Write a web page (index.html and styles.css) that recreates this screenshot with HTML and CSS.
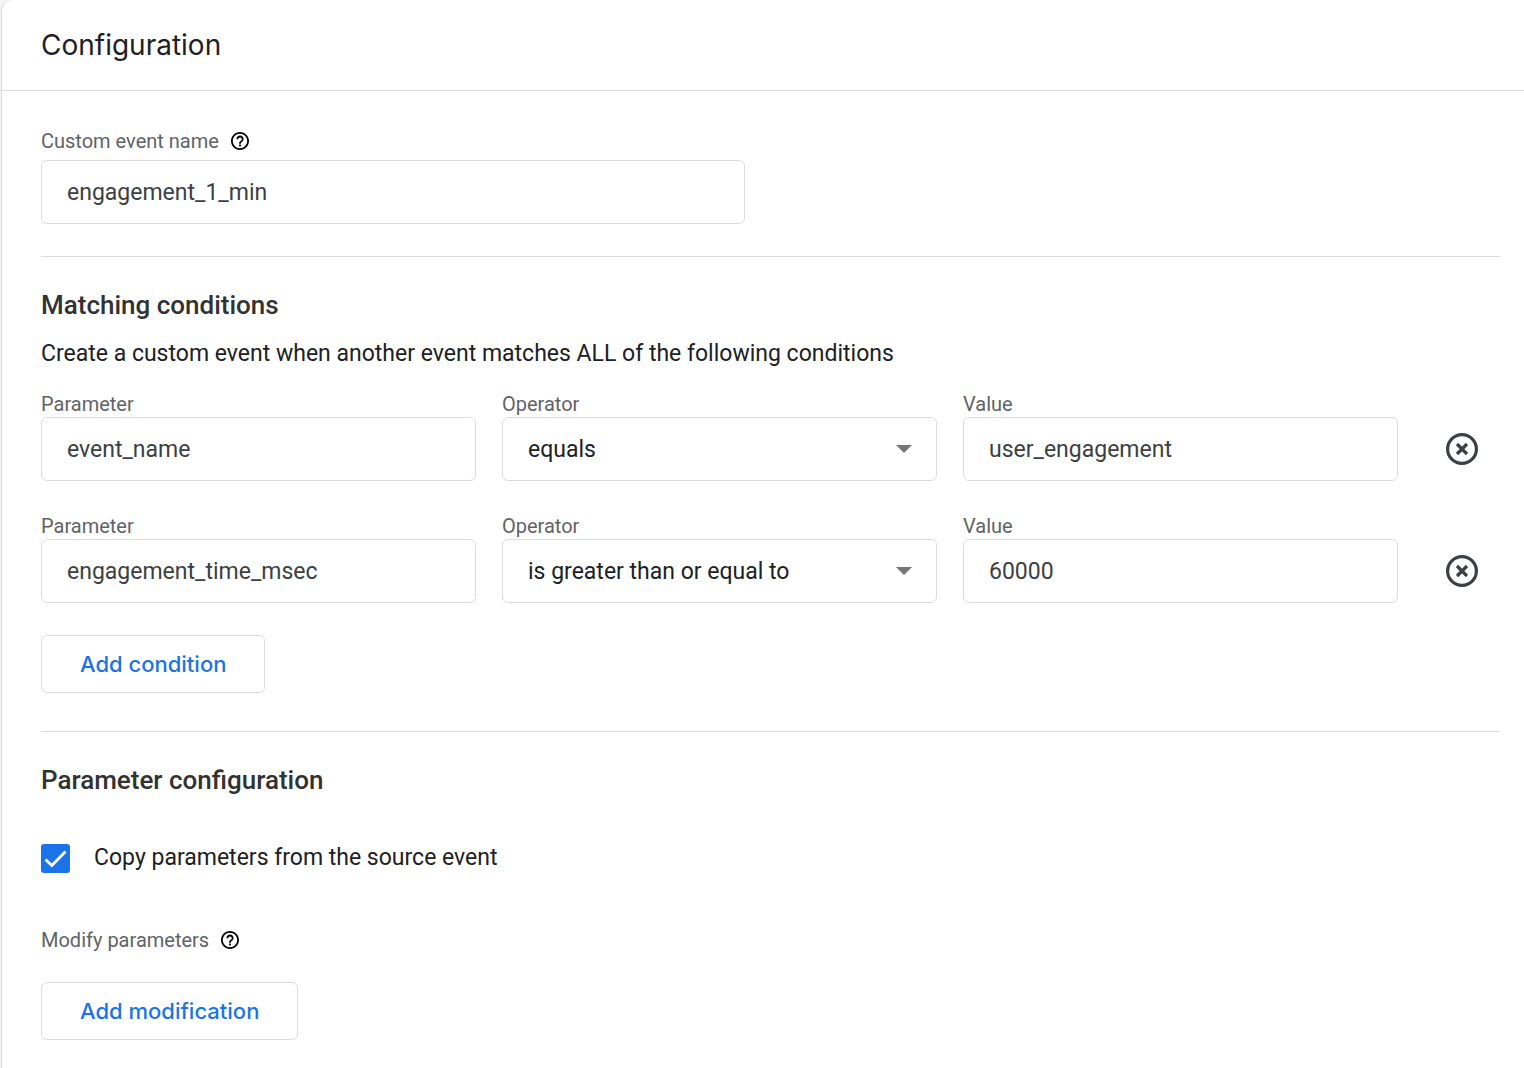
FILE: index.html
```html
<!DOCTYPE html>
<html lang="en">
<head>
<meta charset="utf-8">
<meta name="viewport" content="width=device-width, initial-scale=1">
<title>Configuration</title>
<link rel="stylesheet" href="styles.css">
</head>
<body>
<svg class="sprite" aria-hidden="true">
  <symbol id="help" viewBox="2 2 20 20"><path d="M11 18h2v-2h-2v2zm1-16C6.480 2 2 6.480 2 12s4.480 10 10 10 10-4.480 10-10S17.520 2 12 2zm0 18c-4.410 0-8-3.590-8-8s3.590-8 8-8 8 3.590 8 8-3.590 8-8 8zm0-14c-2.210 0-4 1.790-4 4h2c0-1.100.900-2 2-2s2 .900 2 2c0 2-3 1.750-3 5h2c0-2.250 3-2.500 3-5 0-2.210-1.790-4-4-4z"/></symbol>
  <symbol id="remove" viewBox="0 0 32 32"><circle cx="16" cy="16" r="14.400" fill="none" stroke="currentColor" stroke-width="3.200"/><path d="M11 11l10 10M21 11L11 21" fill="none" stroke="currentColor" stroke-width="3.200"/></symbol>
</svg>
<main class="card">
  <header class="card-header"><h1>Configuration</h1></header>
  <form class="card-body">
    <section class="section section-name">
      <div class="label-row">
        <label for="event-name">Custom event name</label>
        <button type="button" class="help" aria-label="About custom event names"><svg><use href="#help"/></svg></button>
      </div>
      <input class="control control-name" id="event-name" type="text" value="engagement_1_min">
    </section>

    <section class="section">
      <h2>Matching conditions</h2>
      <p class="description">Create a custom event when another event matches ALL of the following conditions</p>
      <div class="conditions">
        <div class="condition">
          <div class="field"><label for="param-1">Parameter</label><input class="control" id="param-1" type="text" value="event_name"></div>
          <div class="field"><label for="op-1">Operator</label><select class="control" id="op-1"><option>equals</option></select></div>
          <div class="field"><label for="value-1">Value</label><input class="control" id="value-1" type="text" value="user_engagement"></div>
          <button type="button" class="remove" aria-label="Remove condition"><svg><use href="#remove"/></svg></button>
        </div>
        <div class="condition">
          <div class="field"><label for="param-2">Parameter</label><input class="control" id="param-2" type="text" value="engagement_time_msec"></div>
          <div class="field"><label for="op-2">Operator</label><select class="control" id="op-2"><option>is greater than or equal to</option></select></div>
          <div class="field"><label for="value-2">Value</label><input class="control" id="value-2" type="text" value="60000"></div>
          <button type="button" class="remove" aria-label="Remove condition"><svg><use href="#remove"/></svg></button>
        </div>
      </div>
      <button type="button" class="button">Add condition</button>
    </section>

    <section class="section">
      <h2>Parameter configuration</h2>
      <label class="check"><input type="checkbox" checked>Copy parameters from the source event</label>
      <div class="label-row label-modify">
        <span>Modify parameters</span>
        <button type="button" class="help" aria-label="About modifying parameters"><svg><use href="#help"/></svg></button>
      </div>
      <button type="button" class="button">Add modification</button>
    </section>
  </form>
</main>
</body>
</html>
```
FILE: styles.css
```css
* {
  box-sizing: border-box;
}

body {
  margin: 0;
  background: #f1f3f4;
  color: #202124;
  font-family: Roboto, "Liberation Sans", sans-serif;
  font-size: 23px;
  line-height: 32px;
}

.sprite {
  display: none;
}

button,
input,
select {
  font: inherit;
}

h1,
h2,
p {
  margin: 0;
}

.card {
  min-height: 100vh;
  margin-left: 1px;
  background: #fff;
  border-left: 1px solid #dadce0;
  border-top-left-radius: 12px;
}

.card-header {
  padding: 25px 39px;
  border-bottom: 1px solid #dadce0;
}

h1 {
  font-family: Inter, "Liberation Sans", sans-serif;
  font-size: 28px;
  font-weight: 400;
  line-height: 40px;
}

h2 {
  color: #323232;
  font-size: 26px;
  font-weight: 500;
}

.card-body {
  padding: 5px 24px 28px 39px;
}

.section {
  padding: 32px 0 38px;
  border-bottom: 1px solid #dadce0;
}

.section-name {
  padding-bottom: 32px;
}

.section:last-child {
  padding-bottom: 0;
  border-bottom: 0;
}

.label-row,
.field label {
  color: #5f6368;
  font-size: 20px;
  line-height: 26px;
}

.label-row {
  display: flex;
  align-items: center;
  gap: 12px;
  margin-bottom: 6px;
}

.help {
  display: flex;
  padding: 0;
  color: #000;
  background: none;
  border: 0;
}

.help svg {
  width: 18px;
  height: 18px;
  fill: currentColor;
}

.control {
  display: block;
  width: 100%;
  height: 64px;
  padding: 0 25px;
  color: #3c4043;
  background: #fff;
  border: 1px solid #dadce0;
  border-radius: 6px;
}

.control-name {
  max-width: 704px;
}

select.control {
  appearance: none;
  padding-top: 2px;
  padding-right: 56px;
  color: #202124;
  background: url("data:image/svg+xml,%3Csvg xmlns='http://www.w3.org/2000/svg' viewBox='0 0 16 8'%3E%3Cpath fill='%23757575' d='M0 0h16L8 8z'/%3E%3C/svg%3E") no-repeat right 24px center / 16px 8px;
}

.description {
  margin: 17px 0 21px;
}

.conditions {
  display: grid;
  gap: 32px;
  margin-bottom: 32px;
}

.condition {
  display: grid;
  grid-template-columns: repeat(3, minmax(0, 1fr)) 76px;
  gap: 26px;
  align-items: end;
}

.field label {
  display: block;
}

.remove {
  display: flex;
  align-items: center;
  justify-content: center;
  height: 64px;
  padding: 0;
  color: #3c4043;
  background: none;
  border: 0;
}

.remove svg {
  width: 32px;
  height: 32px;
}

.button {
  display: block;
  height: 58px;
  padding: 0 38px;
  color: #1a73e8;
  background: #fff;
  border: 1px solid #dadce0;
  border-radius: 6px;
  font-family: Inter, "Liberation Sans", sans-serif;
  font-size: 22px;
  font-weight: 500;
}

.check {
  display: flex;
  align-items: center;
  gap: 24px;
  margin: 46px 0 53px;
}

.check input {
  appearance: none;
  width: 29px;
  height: 29px;
  margin: 0;
  background: #1a73e8;
  border-radius: 3px;
}

.check input:checked {
  background-image: url("data:image/svg+xml,%3Csvg xmlns='http://www.w3.org/2000/svg' viewBox='0 0 29 29'%3E%3Cpath fill='none' stroke='%23fff' stroke-width='2.800' d='M4.500 15.500l6.300 6L24.500 7.500'/%3E%3C/svg%3E");
}

.label-modify {
  margin-bottom: 29px;
}
```
